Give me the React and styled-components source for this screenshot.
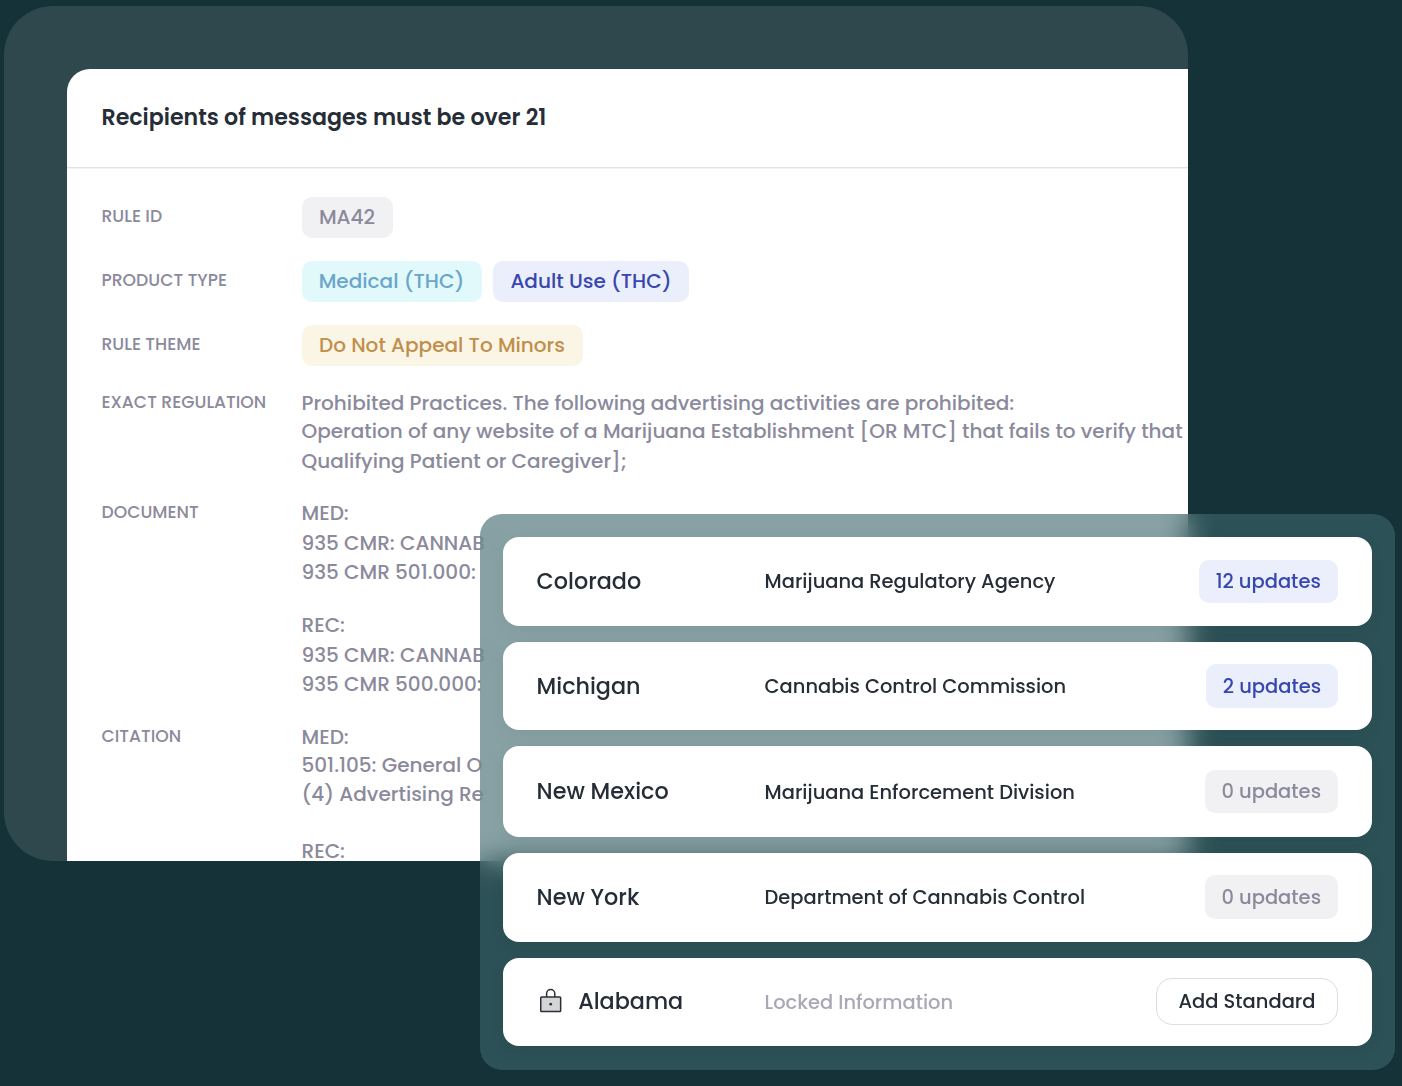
import React from 'react';
import styled, { createGlobalStyle } from 'styled-components';

const GlobalStyle = createGlobalStyle`
  * { box-sizing: border-box; }
  body {
    margin: 0;
    background: #143237;
    font-family: Poppins, Inter, sans-serif;
    font-weight: 500;
    -webkit-font-smoothing: antialiased;
  }
`;

const Stage = styled.main`
  position: relative;
  height: 1086px;
  padding: 6px 0 0 4px;
  overflow: hidden;
`;

const Backdrop = styled.section`
  width: 1184px;
  height: 855px;
  padding: 63px 0 0 63px;
  border-radius: 49px;
  background: #2f484d;
`;

const RuleCard = styled.article`
  height: 792px;
  border-radius: 23px 0 0 0;
  background: #fff;
  overflow: hidden;
`;

const CardHeader = styled.header`
  display: flex;
  align-items: center;
  height: 99px;
  padding: 0 0 1px 34.5px;
  border-bottom: 1px solid #e2e2e6;
  box-shadow: 0 1px 0 #f3f3f5;
`;

const Title = styled.h1`
  margin: 0;
  font-size: 22.12px;
  font-weight: 600;
  line-height: 32px;
  color: #262d36;
`;

const Details = styled.dl`
  display: flex;
  flex-direction: column;
  gap: 23px;
  margin: 0;
  padding: 29px 0 0 34.5px;
`;

const Detail = styled.div`
  display: grid;
  grid-template-columns: 200px 1fr;
  margin-top: ${(p) => p.$top || 0}px;
`;

const Label = styled.dt`
  line-height: ${(p) => (p.$tall ? 39 : 26)}px;
  font-size: 17.22px;
  color: #8b8a9c;
`;

const Value = styled.dd`
  display: flex;
  flex-direction: ${(p) => (p.$lines ? 'column' : 'row')};
  gap: ${(p) => (p.$lines ? 0 : 11.5)}px;
  margin: 0;
`;

const Line = styled.span`
  height: 28px;
  margin-top: ${(p) => p.$gap || 0}px;
  font-size: 20.03px;
  line-height: 28px;
  white-space: nowrap;
  color: #8b8a9c;
`;

const tones = {
  gray: ['#f1f1f4', '#8b8a9c'],
  cyan: ['#e1f9fb', '#6ba5c9'],
  blue: ['#ebeffb', '#3747b0'],
  amber: ['#fbf5e6', '#c08f4c'],
};

const Tag = styled.span`
  display: flex;
  align-items: center;
  justify-content: center;
  width: ${(p) => p.$width}px;
  height: ${(p) => (p.$compact ? 43.5 : 41)}px;
  padding-bottom: ${(p) => (p.$compact ? 0 : 2)}px;
  border-radius: 10px;
  background: ${(p) => tones[p.$tone][0]};
  color: ${(p) => tones[p.$tone][1]};
  font-size: ${(p) => (p.$compact ? 19.5 : 20.05)}px;
  white-space: nowrap;
`;

const StatesPanel = styled.section`
  position: absolute;
  left: 480px;
  top: 513.5px;
  display: flex;
  flex-direction: column;
  gap: 16px;
  width: 915px;
  height: 556.5px;
  padding: 23.5px 23.5px 0 23.2px;
  border-radius: 22px;
  background: rgba(61, 101, 107, 0.61);
  backdrop-filter: blur(14px);
`;

const StateRow = styled.div`
  display: grid;
  grid-template-columns: 228px 1fr auto;
  align-items: center;
  height: ${(p) => p.$height || 88.7}px;
  padding: 0 33.5px 0 33.4px;
  border-radius: 16px;
  background: #fff;
  box-shadow: 0 4px 16px rgba(10, 40, 45, 0.07);
`;

const StateName = styled.span`
  display: flex;
  align-items: center;
  gap: 15px;
  font-size: 22.3px;
  color: #262d36;
`;

const Agency = styled.span`
  padding-top: 1px;
  font-size: 19.45px;
  color: ${(p) => (p.$locked ? '#a9a8b7' : '#262d36')};
`;

const AddButton = styled.button`
  width: 182px;
  height: 47px;
  padding: 0;
  border: 1px solid #dedde6;
  border-radius: 16px;
  background: #fff;
  font: inherit;
  font-size: 19.5px;
  color: #262d36;
`;

const LockSvg = styled.svg`
  margin: -1px 0 0 2.6px;
`;

const LockIcon = () => (
  <LockSvg width="24" height="26" viewBox="0 0 24 26" fill="none">
    <path d="M7.6 9V5.6a4.1 4.1 0 0 1 8.2 0V9" stroke="#2a3038" strokeWidth="1.5" />
    <rect x="1.75" y="9" width="19.9" height="14.6" rx="0.8" fill="#d5d5d6" stroke="#2a3038" strokeWidth="1.5" />
    <circle cx="11.7" cy="16.2" r="1.4" fill="#2a3038" />
  </LockSvg>
);

const paragraphs = [
  {
    label: 'EXACT REGULATION',
    top: 0,
    lines: [
      ['Prohibited Practices. The following advertising activities are prohibited:', 0],
      ['Operation of any website of a Marijuana Establishment [OR MTC] that fails to verify that', 0],
      ['Qualifying Patient or Caregiver];', 2],
    ],
  },
  {
    label: 'DOCUMENT',
    top: 1,
    lines: [
      ['MED:', 0],
      ['935 CMR: CANNAB', 2],
      ['935 CMR 501.000:', 1],
      ['REC:', 25],
      ['935 CMR: CANNAB', 2],
      ['935 CMR 500.000:', 1],
    ],
  },
  {
    label: 'CITATION',
    top: 2,
    lines: [
      ['MED:', 0],
      ['501.105: General O', 0],
      ['(4) Advertising Re', 1],
      ['REC:', 29],
    ],
  },
];

const states = [
  { name: 'Colorado', agency: 'Marijuana Regulatory Agency', updates: '12 updates', tone: 'blue', width: 139.5 },
  { name: 'Michigan', agency: 'Cannabis Control Commission', updates: '2 updates', tone: 'blue', width: 132 },
  { name: 'New Mexico', agency: 'Marijuana Enforcement Division', updates: '0 updates', tone: 'gray', width: 133.5, height: 90.5 },
  { name: 'New York', agency: 'Department of Cannabis Control', updates: '0 updates', tone: 'gray', width: 133.5 },
];

export default function App() {
  return (
    <>
      <GlobalStyle />
      <Stage>
        <Backdrop>
          <RuleCard>
            <CardHeader>
              <Title>Recipients of messages must be over 21</Title>
            </CardHeader>
            <Details>
              <Detail>
                <Label $tall>RULE ID</Label>
                <Value><Tag $tone="gray" $width={91}>MA42</Tag></Value>
              </Detail>
              <Detail>
                <Label $tall>PRODUCT TYPE</Label>
                <Value>
                  <Tag $tone="cyan" $width={180}>Medical (THC)</Tag>
                  <Tag $tone="blue" $width={196}>Adult Use (THC)</Tag>
                </Value>
              </Detail>
              <Detail>
                <Label $tall>RULE THEME</Label>
                <Value><Tag $tone="amber" $width={281}>Do Not Appeal To Minors</Tag></Value>
              </Detail>
              {paragraphs.map((p) => (
                <Detail key={p.label} $top={p.top}>
                  <Label>{p.label}</Label>
                  <Value $lines>
                    {p.lines.map(([text, gap], i) => (
                      <Line key={i} $gap={gap}>{text}</Line>
                    ))}
                  </Value>
                </Detail>
              ))}
            </Details>
          </RuleCard>
        </Backdrop>

        <StatesPanel>
          {states.map((s) => (
            <StateRow key={s.name} $height={s.height}>
              <StateName>{s.name}</StateName>
              <Agency>{s.agency}</Agency>
              <Tag $compact $tone={s.tone} $width={s.width}>{s.updates}</Tag>
            </StateRow>
          ))}
          <StateRow>
            <StateName>
              <LockIcon />
              Alabama
            </StateName>
            <Agency $locked>Locked Information</Agency>
            <AddButton>Add Standard</AddButton>
          </StateRow>
        </StatesPanel>
      </Stage>
    </>
  );
}
